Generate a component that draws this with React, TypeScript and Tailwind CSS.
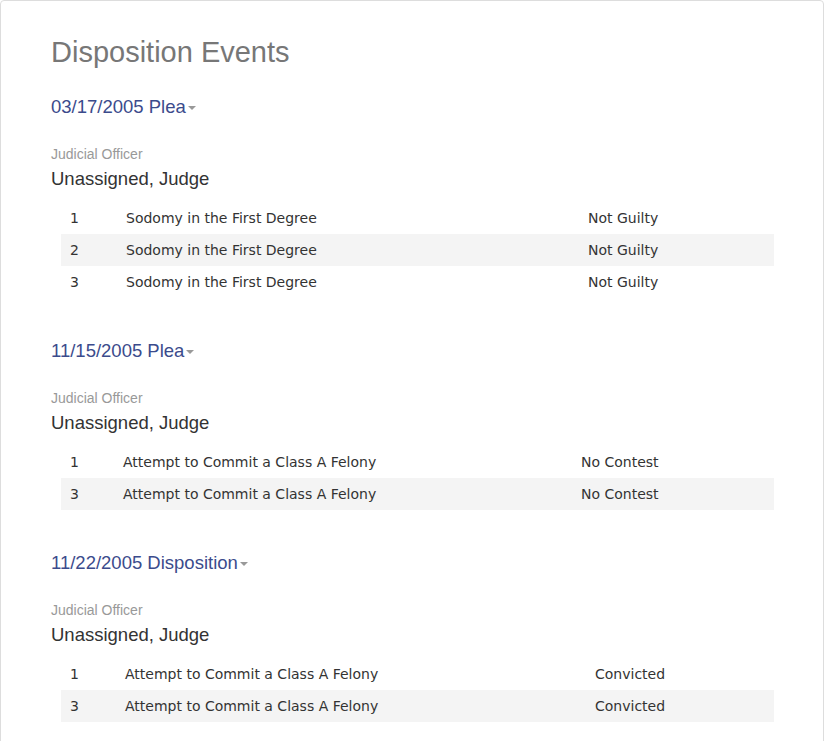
import React from "react";

type Row = { n: string; desc: string; status: string };
type Section = { title: string; rows: Row[]; c1: string; c2: string };

const sections: Section[] = [
  {
    title: "03/17/2005 Plea",
    c1: "w-[56px]",
    c2: "w-[462px]",
    rows: [
      { n: "1", desc: "Sodomy in the First Degree", status: "Not Guilty" },
      { n: "2", desc: "Sodomy in the First Degree", status: "Not Guilty" },
      { n: "3", desc: "Sodomy in the First Degree", status: "Not Guilty" },
    ],
  },
  {
    title: "11/15/2005 Plea",
    c1: "w-[53px]",
    c2: "w-[458px]",
    rows: [
      { n: "1", desc: "Attempt to Commit a Class A Felony", status: "No Contest" },
      { n: "3", desc: "Attempt to Commit a Class A Felony", status: "No Contest" },
    ],
  },
  {
    title: "11/22/2005 Disposition",
    c1: "w-[55px]",
    c2: "w-[470px]",
    rows: [
      { n: "1", desc: "Attempt to Commit a Class A Felony", status: "Convicted" },
      { n: "3", desc: "Attempt to Commit a Class A Felony", status: "Convicted" },
    ],
  },
];

function SectionBlock({ s, first }: { s: Section; first: boolean }) {
  return (
    <div className={first ? "mt-[27px]" : "mt-[41px]"}>
      <div className="text-[18.5px] leading-[24px] text-[#3b4b8c]">
        {s.title}
        <span className="inline-block align-middle ml-[2px] w-0 h-0 border-t-[4px] border-t-[#999] border-l-[4px] border-l-transparent border-r-[4px] border-r-transparent" />
      </div>
      <div className="mt-[25px] text-[14px] leading-[20px] text-[#999]">Judicial Officer</div>
      <div className="mt-[3px] text-[18.5px] leading-[24px] text-[#333]">Unassigned, Judge</div>
      <div
        className="mt-[11px] mx-[10px] text-[14px] leading-[32px] text-[#333]"
        style={{ fontFamily: '"DejaVu Sans", Verdana, sans-serif' }}
      >
        {s.rows.map((r, i) => (
          <div key={i} className={"flex h-[32px] pl-[9px] " + (i % 2 === 1 ? "bg-[#f4f4f4]" : "")}>
            <div className={s.c1}>{r.n}</div>
            <div className={s.c2}>{r.desc}</div>
            <div>{r.status}</div>
          </div>
        ))}
      </div>
    </div>
  );
}

export default function App() {
  return (
    <div className="bg-white min-h-[741px] overflow-hidden" style={{ fontFamily: '"Liberation Sans", Arial, sans-serif' }}>
      <div className="w-[824px] min-h-[760px] border border-[#ddd] rounded-[4px] pl-[50px] pr-[39px] pt-[35px]">
        <h1 className="text-[29px] leading-[32px] text-[#777]">Disposition Events</h1>
        {sections.map((s, i) => (
          <SectionBlock key={i} s={s} first={i === 0} />
        ))}
      </div>
    </div>
  );
}
